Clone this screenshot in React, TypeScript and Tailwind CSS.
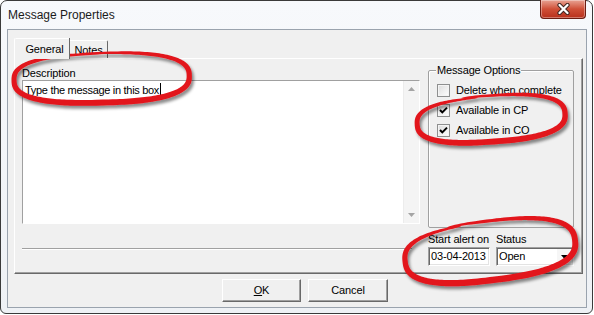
import React from 'react';

// hand-drawn marker ring: a slightly boxy ellipse drawn as a filled band that tapers at both ends
function ringPath(
  cx: number,
  cy: number,
  rx: number,
  ry: number,
  rot: number,
  a0: number,
  sweep: number,
  s0: number,
  s1: number,
  wMax: number,
  p = 2.6
) {
  const n = 200;
  const r = (rot * Math.PI) / 180;
  const outer: string[] = [];
  const inner: string[] = [];
  const put = (x: number, y: number) =>
    `${(cx + x * Math.cos(r) - y * Math.sin(r)).toFixed(2)},${(cy + x * Math.sin(r) + y * Math.cos(r)).toFixed(2)}`;
  const sp = (v: number) => Math.sign(v) * Math.pow(Math.abs(v), 2 / p);
  for (let i = 0; i <= n; i++) {
    const t = i / n;
    const a = ((a0 + sweep * t) * Math.PI) / 180;
    const s = s0 + (s1 - s0) * t;
    const w = wMax * Math.pow(Math.sin(Math.PI * t), 0.45) + 0.4;
    const ex = sp(Math.cos(a));
    const ey = sp(Math.sin(a));
    outer.push(put((rx * s + w / 2) * ex, (ry * s + w / 2) * ey));
    inner.push(put((rx * s - w / 2) * ex, (ry * s - w / 2) * ey));
  }
  return `M${outer.join(' L')} L${inner.reverse().join(' L')} Z`;
}

const Marks = () => (
  <svg className="pointer-events-none absolute left-0 top-0" width={594} height={315} viewBox="0 0 594 315">
    <defs>
      <filter id="shade" x="-20%" y="-30%" width="140%" height="160%">
        <feDropShadow dx="2" dy="3" stdDeviation="1.8" floodColor="#000" floodOpacity="0.45" />
      </filter>
    </defs>
    <g fill="#e2151c" filter="url(#shade)">
      <path d={ringPath(101, 78, 89, 25, -1.5, -100, 372, 1.0, 0.97, 5.5)} />
      <path d={ringPath(490, 119, 75, 23, -4, -105, 370, 1.02, 0.96, 5.5)} />
      <path d={ringPath(489, 251, 88, 30, -7, -110, 368, 1.0, 0.95, 6)} />
    </g>
  </svg>
);

const CloseButton = () => (
  <div className="-mt-[1px] flex h-[19px] w-[46px] items-center justify-center rounded-b-[4px] border border-t-0 border-[#6b1d12] bg-gradient-to-b from-[#e7a293] via-[#cf4f37] to-[#b8301b] shadow-[inset_0_0_0_1px_rgba(255,255,255,0.35)]">
    <svg width="13" height="12" viewBox="0 0 13 12">
      <path d="M2.5 2 L10.5 10 M10.5 2 L2.5 10" stroke="#3d2420" strokeWidth="4.2" strokeLinecap="round" />
      <path d="M2.5 2 L10.5 10 M10.5 2 L2.5 10" stroke="#ffffff" strokeWidth="2.3" strokeLinecap="round" />
    </svg>
  </div>
);

const Check = ({ on, label }: { on: boolean; label: string }) => (
  <div className="flex h-[20px] items-center">
    <div className="flex h-[13px] w-[13px] items-center justify-center border border-[#8e8f8f] bg-gradient-to-br from-[#dcdcdc] to-white shadow-[inset_0_0_0_1px_#f4f4f4]">
      {on && (
        <svg width="11" height="11" viewBox="0 0 11 11">
          <path d="M2 5 L4.3 7.4 L9 2.6" fill="none" stroke="#000" strokeWidth="2" />
        </svg>
      )}
    </div>
    <span className="ml-[6px] whitespace-nowrap leading-[14px]">{label}</span>
  </div>
);

const sunken =
  'border border-[#a0a0a0] border-b-white border-r-white shadow-[inset_1px_1px_0_#696969,inset_-1px_-1px_0_#e3e3e3]';
const raised =
  'border border-white border-b-[#696969] border-r-[#696969] shadow-[inset_-1px_-1px_0_#a0a0a0]';

export default function App() {
  return (
    <div className="relative h-[315px] w-[594px] overflow-hidden bg-white font-['Liberation_Sans',Arial,sans-serif] text-[11px] tracking-[-0.15px] text-black">
      <div className="flex h-[314px] w-[593px] flex-col rounded-b-[6px] rounded-t-[7px] border border-[#3a3a3a] bg-gradient-to-b from-[#f7f9fc] to-[#eef1f5]">
        {/* title bar */}
        <div className="flex h-[28px] shrink-0 justify-between pl-[7px] pr-[6px]">
          <span className="mt-[6px] text-[12px] leading-[16px] tracking-normal text-[#1b1b1b]">Message Properties</span>
          <CloseButton />
        </div>

        {/* client area */}
        <div className="mb-[5px] ml-[6px] mr-[5px] flex flex-1 flex-col border border-[#9aa3ae] bg-[#f0f0f0]">
          {/* tabs */}
          <div className="ml-[6px] mt-[8px] flex h-[20px] items-start">
            <div className="relative z-10 flex h-[21px] w-[55px] items-start justify-center rounded-tl-[2px] border-l border-t border-white bg-[#f0f0f0] pl-[5px] pt-[3px] leading-[14px] shadow-[1px_0_0_#696969]">
              General
            </div>
            <div className="ml-[1px] mt-[2px] flex h-[18px] w-[38px] items-start justify-center rounded-tr-[2px] border-r border-t border-r-[#696969] border-t-white pt-[2px] leading-[14px]">
              Notes
            </div>
          </div>

          {/* tab page */}
          <div className={`ml-[6px] flex h-[216px] w-[569px] ${raised}`}>
            <div className="flex w-[405px] flex-col pl-[7px]">
              <span className="mt-[7px] leading-[14px]">Description</span>
              <div className={`flex h-[144px] w-[398px] ${sunken}`}>
                <div className="flex-1 bg-white pl-[2px] pt-[1px]">
                  <span className="leading-[14px] tracking-[-0.3px]">Type the message in this box</span>
                  <span className="ml-[1px] inline-block h-[13px] w-px bg-black align-[-2px]" />
                </div>
                <div className="flex w-[16px] flex-col items-center justify-between bg-[#f4f4f4] py-[6px] shadow-[inset_1px_0_0_#ececec]">
                  <svg width="7" height="4" viewBox="0 0 7 4">
                    <path d="M0 4 L3.5 0 L7 4 Z" fill="#a4a4a4" />
                  </svg>
                  <svg width="7" height="4" viewBox="0 0 7 4">
                    <path d="M0 0 L7 0 L3.5 4 Z" fill="#a4a4a4" />
                  </svg>
                </div>
              </div>
              <div className="mt-[24px] h-[2px] w-[390px] border-b border-t border-b-white border-t-[#a0a0a0]" />
            </div>

            <div className="ml-[8px] flex w-[146px] flex-col">
              <fieldset className="mt-[4px] h-[165px] rounded-[2px] border border-[#a0a0a0] px-0 shadow-[inset_1px_1px_0_#fff]">
                <legend className="ml-[7px] bg-[#f0f0f0] px-[1px] leading-[14px]">Message Options</legend>
                <div className="mt-[3px] flex flex-col pl-[8px]">
                  <Check on={false} label="Delete when complete" />
                  <Check on label="Available in CP" />
                  <Check on label="Available in CO" />
                </div>
              </fieldset>

              <div className="mt-[4px] flex leading-[14px]">
                <span className="w-[68px] whitespace-nowrap">Start alert on</span>
                <span>Status</span>
              </div>
              <div className="mt-[1px] flex h-[19px] gap-[6px]">
                <div className={`flex w-[62px] items-center bg-white pl-[2px] ${sunken}`}>03-04-2013</div>
                <div className={`flex w-[78px] items-center bg-white pl-[2px] ${sunken}`}>
                  <span className="flex-1">Open</span>
                  <div className="mr-[1px] flex h-[15px] w-[15px] items-center justify-center bg-[#f6f6f6]">
                    <svg width="7" height="4" viewBox="0 0 7 4">
                      <path d="M0 0 L7 0 L3.5 4 Z" fill="#000" />
                    </svg>
                  </div>
                </div>
              </div>
            </div>
          </div>

          {/* buttons */}
          <div className="mt-[5px] flex gap-[7px] pl-[214px]">
            <button className={`flex h-[23px] w-[79px] items-center justify-center bg-[#f0f0f0] ${raised}`}>
              <span>
                <span className="underline">O</span>K
              </span>
            </button>
            <button className={`flex h-[23px] w-[80px] items-center justify-center bg-[#f0f0f0] ${raised}`}>
              Cancel
            </button>
          </div>
        </div>
      </div>
      <Marks />
    </div>
  );
}
